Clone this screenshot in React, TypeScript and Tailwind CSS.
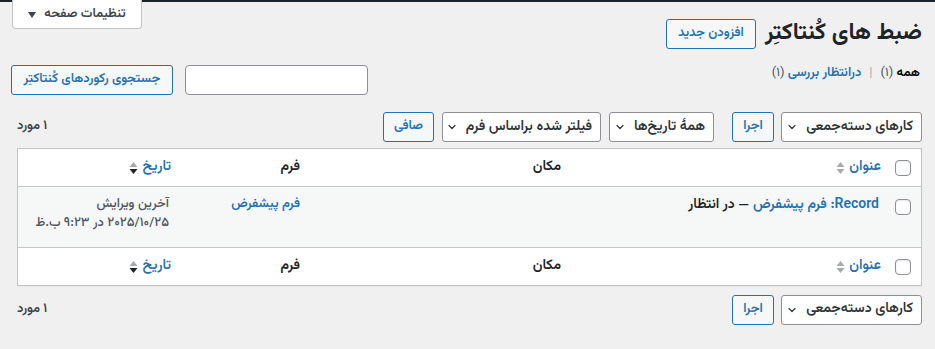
import React from "react";

const Chevron = () => (
  <svg width="12" height="12" viewBox="0 0 20 20" className="shrink-0">
    <path d="M5 7.5l5 5 5-5" fill="none" stroke="#2c3338" strokeWidth="2" strokeLinecap="round" strokeLinejoin="round" />
  </svg>
);

const SortIcon = ({ desc }: { desc?: boolean }) => (
  <svg width="9" height="16" viewBox="0 0 9 16" className="shrink-0">
    <path d="M4.5 2 L8.5 7 L0.5 7 Z" fill="#a7aaad" />
    <path d="M0.5 9 L8.5 9 L4.5 14 Z" fill={desc ? "#1d2327" : "#a7aaad"} />
  </svg>
);

const Checkbox = () => (
  <span className="block w-4 h-4 rounded-[4px] border border-[#8c8f94] bg-white shadow-[inset_0_1px_2px_rgba(0,0,0,0.1)]" />
);

const Select = ({ label, w }: { label: string; w: string }) => (
  <div className={`h-[30px] ${w} flex items-center justify-between gap-2 bg-white border border-[#8c8f94] rounded-[3px] pr-2 pl-[7px] text-[14px] font-semibold text-[#2c3338]`}>
    <span className="whitespace-nowrap">{label}</span>
    <Chevron />
  </div>
);

const Btn = ({ label, cls }: { label: string; cls?: string }) => (
  <div className={`h-[30px] flex items-center justify-center bg-[#f6f7f7] border border-[#2271b1] rounded-[3px] text-[13px] text-[#2271b1] font-semibold whitespace-nowrap ${cls || ""}`}>
    {label}
  </div>
);

const grid = "grid grid-cols-[31px_320px_261px_129px_1fr]";

const HeadRow = ({ top }: { top?: boolean }) => (
  <div className={`${grid} h-[38px] items-center bg-white ${top ? "border-b" : "border-t"} border-[#c3c4c7]`}>
    <div className="pr-[10px] flex"><Checkbox /></div>
    <div className="pr-[9px] flex items-center gap-1 text-[#2271b1] font-semibold text-[14px]">
      <span>عنوان</span>
      <SortIcon />
    </div>
    <div className="pr-[9px] text-[#1d2327] font-semibold text-[14px]">مکان</div>
    <div className="pr-[9px] text-[#1d2327] font-semibold text-[14px]">فرم</div>
    <div className="pr-[9px] flex items-center gap-1 text-[#2271b1] font-semibold text-[14px]">
      <span>تاریخ</span>
      <SortIcon desc />
    </div>
  </div>
);

export default function App() {
  return (
    <div dir="rtl" className="min-h-[349px] bg-[#f0f0f1] text-[13px] text-[#3c434a] font-['Vazirmatn','DejaVu_Sans',sans-serif]">
      <div className="h-[2px] bg-[#1d2327]" />
      <div className="flex justify-end pl-[12px]">
        <div className="w-[130px] h-[29px] -mt-[2px] pt-[2px] bg-white border border-t-0 border-[#c3c4c7] rounded-b-[4px] flex items-center justify-center gap-2 text-[13px] text-[#3c434a] font-semibold">
          <span>تنظیمات صفحه</span>
          <svg width="8" height="6" viewBox="0 0 8 6"><path d="M0 0h8L4 6z" fill="#3c434a" /></svg>
        </div>
      </div>

      <div className="pr-[13px] pl-[17px]">
        <div className="flex items-center gap-[9px] -mt-[10px] h-[29px]">
          <h1 className="text-[23px] font-bold text-[#1d2327] leading-none">ضبط های کُنتاکتِر</h1>
          <Btn label="افزودن جدید" cls="w-[90px] h-[29px]" />
        </div>

        <div className="flex items-center justify-between mt-[17px] h-[30px]">
          <div className="pr-[2px] text-[13px] flex items-center gap-1 -mt-[12px]">
            <span className="text-[#000] font-semibold">همه <span className="font-normal text-[#50575e]">(۱)</span></span>
            <span className="text-[#a7aaad] px-1">|</span>
            <span className="text-[#2271b1] font-semibold">درانتظار بررسی <span className="font-normal text-[#50575e]">(۱)</span></span>
          </div>
          <div className="flex items-center gap-[12px] -ml-[6px]">
            <div className="w-[183px] h-[30px] bg-white border border-[#8c8f94] rounded-[4px]" />
            <Btn label="جستجوی رکوردهای کُنتاکتِر" cls="w-[162px]" />
          </div>
        </div>

        <div className="flex items-center justify-between mt-[17px] h-[30px]">
          <div className="flex items-center">
            <Select label="کارهای دسته‌جمعی" w="w-[141px]" />
            <Btn label="اجرا" cls="w-[42px] mr-[7px]" />
            <div className="mr-[18px]"><Select label="همهٔ تاریخ‌ها" w="w-[105px]" /></div>
            <div className="mr-[8px]"><Select label="فیلتر شده براساس فرم" w="w-[159px]" /></div>
            <Btn label="صافی" cls="w-[51px] mr-[8px]" />
          </div>
          <div className="text-[13px] text-[#3c434a] font-semibold">۱ مورد</div>
        </div>

        <div className="mt-[6px] border border-[#c3c4c7] bg-white shadow-[0_1px_1px_rgba(0,0,0,0.04)]">
          <HeadRow top />
          <div className={`${grid} h-[60px] bg-[#f6f7f7] items-start`}>
            <div className="pr-[10px] pt-[12px] flex"><Checkbox /></div>
            <div className="pr-[11px] pt-[8px] font-semibold text-[14px]">
              <span className="text-[#2271b1]">Record: فرم پیشفرض</span>
              <span className="text-[#1d2327]"> — در انتظار</span>
            </div>
            <div />
            <div className="pr-[9px] pt-[8px] text-[#2271b1] font-semibold">فرم پیشفرض</div>
            <div className="pr-[11px] pt-[8px] text-[#50575e] font-medium leading-[19px]">
              <div>آخرین ویرایش</div>
              <div>۲۰۲۵/۱۰/۲۵ در ۹:۲۳ ب.ظ</div>
            </div>
          </div>
          <HeadRow />
        </div>

        <div className="flex items-center justify-between mt-[8px] h-[31px]">
          <div className="flex items-center">
            <Select label="کارهای دسته‌جمعی" w="w-[141px]" />
            <Btn label="اجرا" cls="w-[42px] mr-[7px]" />
          </div>
          <div className="text-[13px] text-[#3c434a] font-semibold">۱ مورد</div>
        </div>
      </div>
    </div>
  );
}
